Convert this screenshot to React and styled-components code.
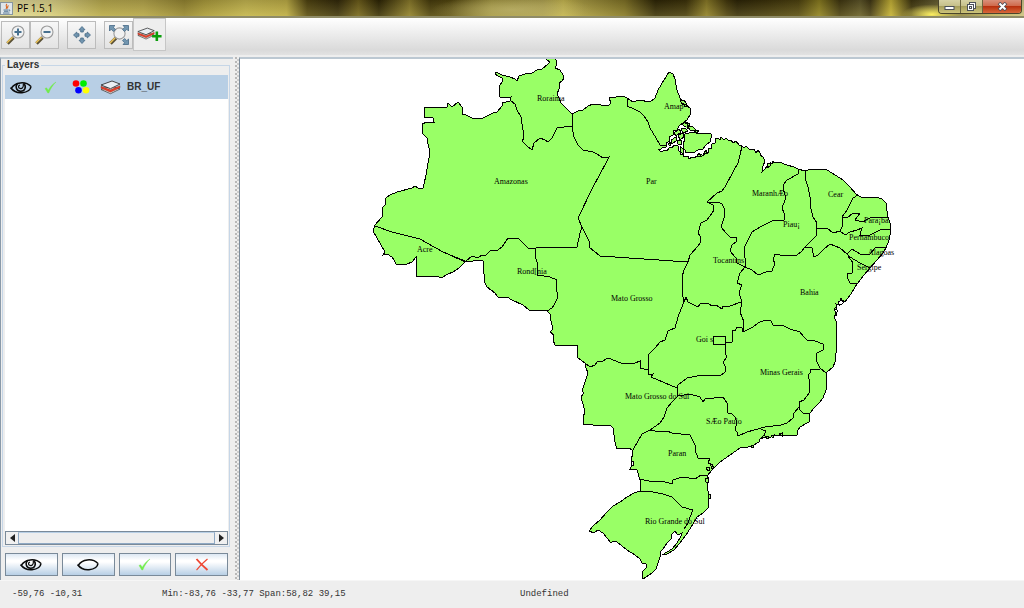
import React from 'react';
import styled, { createGlobalStyle, css } from 'styled-components';

const GlobalStyle = createGlobalStyle`
  * { box-sizing: border-box; }
  body { margin: 0; background: #eeeeee; font-family: "Liberation Sans", Arial, sans-serif; }
  button { font: inherit; margin: 0; padding: 0; }
`;

const Window = styled.div`
  display: flex;
  flex-direction: column;
  height: 100vh;
  background: #eeeeee;
  color: #333333;
`;

const TitleBar = styled.header`
  display: flex;
  align-items: flex-start;
  justify-content: space-between;
  flex: none;
  height: 18px;
  border-bottom: 2px solid #8f8c68;
  background:
    radial-gradient(ellipse 30px 10px at 91% 90%, #fbee62, transparent),
    radial-gradient(ellipse 80px 14px at 50% 60%, rgba(190, 180, 110, 0.7), transparent),
    linear-gradient(180deg, rgba(0, 0, 0, 0.12), rgba(255, 245, 140, 0.18)),
    linear-gradient(90deg,
      #e0d9a0 0, #d5cc85 5%, #b3a54c 10%, #b0a14a 14%, #8f8030 18%, #a5963a 20%, #beb04e 24%,
      #b7a744 28%, #4c4010 30%, #30270a 33%, #695a1a 35%, #2b2305 37%, #85762a 40%, #44390c 42%,
      #50440f 44%, #978a38 48%, #a39647 53%, #c0b14c 55%, #a0923f 57%, #7b6e25 61%, #2c2406 64%,
      #3a300a 67%, #857626 69%, #40350c 71%, #2b2307 72%, #3a300a 75%, #4b400f 78%,
      #85781f 80%, #3d3410 82%, #5a5228 84%, #3d3414 85%, #c0ad35 87%, #3d3410 89%, #5b532b 91%,
      #b8ad62 97%, #c9c08a 100%);
`;

const TitleText = styled.h1`
  display: flex;
  align-items: center;
  gap: 4px;
  margin: 0;
  height: 16px;
  font: 400 10px/16px "Open Sans", "Noto Sans", sans-serif;
  color: #000000;
`;

const WindowControls = styled.div`
  display: flex;
  height: 14px;
  margin-right: 2px;
  border: 1px solid #4a452c;
  border-top: 0;
  border-radius: 0 0 4px 4px;
  overflow: hidden;
`;

const ControlButton = styled.button`
  display: flex;
  align-items: center;
  justify-content: center;
  width: ${p => (p.$close ? 38 : 22)}px;
  border: 0;
  border-right: ${p => (p.$close ? 0 : '1px solid #6b6540')};
  background: ${p => p.$close
    ? 'linear-gradient(#d9907a 0, #cf6a4c 45%, #b8310f 50%, #d8683a 100%)'
    : 'linear-gradient(#d6d1a4 0, #c6c08a 45%, #a69e5c 50%, #cdc47a 100%)'};
`;

const Toolbar = styled.nav`
  display: flex;
  align-items: flex-start;
  flex: none;
  height: 39px;
  padding-left: 1px;
  border-bottom: 2px solid #eeeeee;
  background: linear-gradient(#ffffff 0, #dadada 86%, #e2e2e2 100%);
`;

const ToolGroup = styled.div`
  display: flex;
  padding-top: 3px;
  margin-right: ${p => (p.$joined ? 0 : 8)}px;
`;

const ToolButton = styled.button`
  display: flex;
  align-items: center;
  justify-content: center;
  width: 29px;
  height: 28px;
  border: 1px solid #bcbcbc;
  background: linear-gradient(#f7f7f7, #e3e3e3);
  ${p => p.$large && css`
    width: 33px;
    height: 33px;
    border-color: #c6c6c6;
    background: #eeeeee;
  `}
`;

const Workspace = styled.div`
  display: flex;
  flex: 1;
  min-height: 0;
`;

const SidePanel = styled.aside`
  display: flex;
  flex-direction: column;
  flex: none;
  width: 233px;
  padding: 0 3px 4px 1px;
  border-top: 2px solid #bcc8d2;
  border-left: 1px solid #8a99a8;
`;

const LayersBox = styled.fieldset`
  display: flex;
  flex-direction: column;
  flex: 1;
  min-width: 0;
  min-height: 0;
  margin: 0;
  padding: 4px 1px 1px 2px;
  border: 1px solid #c6d6e7;
`;

const LayersTitle = styled.legend`
  padding: 0 2px;
  font: 700 10px/12px "Liberation Sans", Arial, sans-serif;
`;

const LayerList = styled.ul`
  flex: 1;
  margin: 0;
  padding: 0;
  list-style: none;
  background: #ffffff;
`;

const LayerRow = styled.li`
  display: grid;
  grid-template-columns: 34px 28px 28px 27px 1fr;
  align-items: center;
  height: 24px;
  padding-left: 5px;
  background: #b8cfe5;
  font: 700 10px/14px "Liberation Sans", Arial, sans-serif;
`;

const ScrollBar = styled.div`
  display: flex;
  flex: none;
  height: 14px;
  border: 1px solid #7a8a99;
  background: #eeeeee;
`;

const ScrollArrow = styled.button`
  display: flex;
  align-items: center;
  justify-content: center;
  width: 12px;
  border: 0;
  background: #f0f0f0;
`;

const ScrollThumb = styled.div`
  flex: 1;
  border: 1px solid #8fa9c4;
  border-top-color: #b8cfe5;
  background: #eeeeee;
`;

const ActionRow = styled.div`
  display: grid;
  grid-template-columns: repeat(4, 1fr);
  flex: none;
  gap: 4px;
  margin-top: 6px;
  padding: 0 2px 0 3px;
`;

const ActionButton = styled.button`
  display: flex;
  align-items: center;
  justify-content: center;
  height: 23px;
  border: 1px solid #7a8a99;
  background: linear-gradient(#dde8f3 0, #ffffff 30%, #ffffff 38%, #b8cfe5 100%);
`;

const Divider = styled.div`
  flex: none;
  width: 6px;
  background-color: #eeeeee;
  background-image:
    radial-gradient(circle at 1px 1px, #b8b8b8 1px, transparent 1px),
    radial-gradient(circle at 3px 3px, #cccccc 1px, transparent 1px);
  background-size: 4px 4px;
  background-position: 2px 0;
  background-repeat: repeat-y;
`;

const MapView = styled.main`
  flex: 1;
  min-width: 0;
  border-top: 2px solid #bcc8d2;
  border-left: 1px solid #7a8a99;
  background: #ffffff;
`;

const MapDrawing = styled.svg`
  display: block;
  width: 100%;
  height: 100%;
  .land { fill: #99ff66; stroke: #000000; stroke-width: 1; shape-rendering: crispEdges; }
  .border { fill: none; stroke: #000000; stroke-width: 1; shape-rendering: crispEdges; }
  .water { fill: #ffffff; stroke: #000000; stroke-width: 1; shape-rendering: crispEdges; }
  text { font: 400 8px "Liberation Serif", "Times New Roman", serif; fill: #000000; }
`;

const StatusBar = styled.footer`
  display: grid;
  grid-template-columns: 150px 358px 1fr;
  flex: none;
  height: 28px;
  padding-left: 12px;
  border-top: 1px solid #f6f6f6;
  font: 400 9px/26px "Liberation Mono", "Courier New", monospace;
`;

const COAST = `M548 64 L550 62 546 59 550 58 555 59 557 61 556 66 555 68 560 70 563 75 564 78 562 81
559 83 559 89 557 94 559 98 561 103 567 109 572 114 578 111 583 110 588 106 593 104 608 106 611 103
609 98 616 97 623 96 627 98 633 102 639 100 650 102 655 98 658 90 664 80 669 72 673 74 675 79 677 90
680 98 682 101 684 101 683 104 686 105 691 109 690 115 687 120 683 123 679 126 677 130 673 131 673 135
669 137 670 141 666 143 666 147 662 148 660 150 658 149 661 152 665 150 667 151 670 147 672 148 674 145
677 145 679 147 678 150 680 152 680 155 683 154 684 157 688 156 689 159 692 157 694 158 697 156 699 157
701 154 703 156 706 152 708 153 709 148 711 149 712 144 715 143 715 139 718 138 720 140
721 137 724 140 726 138 729 141 731 140 733 143 736 141 739 145 742 146 744 148 746 146 749 149 752 150
754 149 756 153 758 150 760 153 760 155 763 157 765 161 763 166 762 172 765 169 768 165 773 163 779 162
787 165 794 167 798 169 805 171 811 169 823 169 827 170 832 173 843 180 850 187 856 194 861 197 868 198
876 197 882 199 886 203 887 211 888 217 890 223 891 230 889 240 886 248 883 253 877 260 870 268 864 275
857 284 851 294 845 302 842 300 840 302 838 302 839 305 836 304 837 308 834 309 836 313 834 317 836 321
837 340 836 345 836 353 835 362 833 367 826 373 826 380 826 390 823 398 820 402 814 408 810 413 809 422
800 427 798 430 797 435 773 436 767 439 765 437 760 439 759 442 752 446 748 447 740 448 730 455 720 462
712 470 707 476 708 481 707 483 708 491 709 498 708 508 703 513 697 517 693 524 688 532 680 543 674 550
667 554 662 555 667 552 672 549 677 543 681 536 682 533 678 535 675 531 672 534 671 539 667 543 663 549
660 552 661 554 659 560 656 569 652 573 643 579 642 572 647 567 646 564 642 563 640 559 635 555 627 550
617 542 613 541 611 543 607 538 603 533 598 530 594 533 589 531 593 526 600 520 607 512 613 506 620 502
627 497 634 493 640 491 640 480 637 470 634 469 630 469 633 464 631 459 633 454 632 450 629 448 623 448
617 449 615 442 613 428 610 425 603 426 583 424 583 417 585 412 583 404 581 397 584 393 582 391 585 382
588 373 586 368 585 363 578 358 577 353 578 346 555 345 553 340 554 335 550 332 553 329 551 321 550 314
547 311 529 310 523 305 512 300 507 297 498 297 495 293 491 290 487 287 484 281 484 274 483 271 484 262
482 260 465 262 459 268 453 272 448 274 441 278 437 276 416 277 416 257 412 262 407 264 396 264 394 260
392 257 387 254 383 255 385 252 381 245 377 238 373 231 375 225 382 217 382 208 385 205 386 198 390 195
397 192 412 188 415 186 418 188 423 188 424 184 426 175 430 152 428 144 427 138 422 133 422 124 427 122
434 122 433 118 424 117 424 107 447 107 448 103 452 107 458 102 462 107 462 114 466 115 472 118 477 119
483 118 485 117 493 113 497 112 502 106 502 103 510 101 511 97 507 98 500 97 499 87 502 82 502 78 498 76
495 74 496 72 502 75 510 77 515 79 517 81 519 76 525 74 532 73 537 70 542 69Z`;

const BORDERS = [
  'M511 101 L515 104 517 110 521 117 523 130 524 138 522 141 527 146 532 150 534 143 540 138 545 140 548 142 552 138 557 128 572 126',
  'M572 114 L572 127 574 137 578 145 583 150 593 152 597 154 603 158 609 157 607 161 593 187 578 218 582 227 580 233 577 247 536 248 528 248 518 238 508 238 502 247 498 250 490 251 485 256 482 255 478 258 472 256 465 262',
  'M375 226 L392 232 420 239 443 252 465 261 M448 254 L465 262',
  'M536 248 L535 256 537 262 537 275 550 277 557 280 556 286 558 297 554 305 552 308 547 311',
  'M582 227 L589 241 589 247 600 256 688 262',
  'M688 262 L690 255 698 246 700 243 700 236 698 233 701 223 707 220 712 213 714 210 713 205 707 202 718 202 722 204 724 208 724 218 721 227 726 233 730 237 737 238 736 242 732 245 730 251 736 258 737 263 745 267',
  'M742 146 L740 155 738 163 733 172 725 187 722 191 717 193 707 202',
  'M688 262 L684 270 682 277 682 292 684 302 686 297 688 302 698 307 701 303 704 304 708 303 712 306 716 305 722 309 723 306 730 306 741 302',
  'M745 267 L740 273 737 283 742 285 739 292 740 296 742 302 740 312 744 322 743 332',
  'M798 169 L798 174 787 180 784 184 783 188 785 195 785 200 782 208 784 213 784 220 772 221 762 226 752 232 748 240 744 248 745 258 745 267',
  'M805 171 L805 178 808 187 810 197 811 209 813 217 817 223 816 236 805 247 802 251 797 255 785 256 775 254 773 260 775 263 772 271 766 272 758 275 752 270 745 267',
  'M816 229 L827 228 833 233 840 231 845 235 850 232 857 230 862 228 860 235 870 235 880 230 890 229',
  'M858 195 L853 198 847 210 842 217 843 224 840 232',
  'M842 217 L847 218 853 213 860 213 855 220 863 222 866 220 872 217 888 217',
  'M805 247 L812 248 814 257 818 255 824 249 830 244 840 248 847 254 852 249 860 254 870 254 875 248 887 247',
  'M847 254 L850 257 860 263 870 268 M848 256 L853 263 852 273 847 274 848 279 850 283 857 284',
  'M743 332 L753 327 758 323 765 320 771 321 773 325 782 325 790 329 800 332 803 336 807 340 815 341 823 344 823 350 817 353 816 360 820 368 826 373',
  'M820 369 L810 369 811 372 808 375 810 383 809 393 804 400 799 402 799 409 803 413 810 413',
  'M799 407 L794 413 793 418 787 423 781 425 765 427 747 432 738 436 737 432 735 430 737 423 735 417 731 413 728 413 727 403 723 397 705 399 703 402 700 397 690 394 678 396',
  'M758 428 L766 431 764 435 760 439',
  'M743 332 L742 328 737 327 735 331 732 330 732 342 725 343 726 348 725 353 727 357 723 362 726 368 725 372 720 376 702 375 687 378 678 385 677 390 678 396',
  'M713 336H725V344H713Z',
  'M684 302 L681 309 678 317 675 328 670 330 668 331 665 340 660 342 655 348 648 355 648 372',
  'M585 363 L590 367 595 365 598 361 603 361 608 358 616 361 623 364 630 363 635 363 640 361 640 368 648 370 649 375 653 374 651 377 677 388',
  'M677 390 L677 397 672 402 667 408 664 417 660 423 650 430 642 434 638 441 633 450',
  'M648 430 L662 432 667 431 672 433 690 435 695 445 695 450 698 458 710 458 708 463 713 465 711 469',
  'M640 479 L653 482 662 481 672 484 673 480 682 477 689 478 695 479 701 475 707 475',
  'M640 491 L653 492 663 494 672 497 682 507 693 510 690 517 688 523 684 529',
  'M627 98 L627 106 634 109 640 112 644 116 648 122 650 128 656 138 660 145 666 145',
];

const ISLANDS = [
  'M685 134 L693 132 700 134 705 133 711 134 711 138 710 142 706 145 703 149 698 150 693 153 690 152 686 153 685 150 683 148 684 145 683 143 685 140 684 137Z',
  'M687 126 L693 127 696 130 691 131Z',
  'M693 130 L699 130 697 133Z',
  'M682 124 L686 122 690 124 688 127 684 126Z',
  'M678 135 L683 133 684 137 680 140Z',
  'M677 140 L682 140 681 145 678 144Z',
  'M674 133 L679 129 681 132 676 136Z',
  'M681 129 L685 128 688 131 683 133Z',
  'M671 140 L676 137 676 141 672 144Z',
  'M680 146 L683 149 683 154 680 151Z',
  'M685 123 L688 124 687 129',
  'M668 144 L671 142 670 146Z',
  'M697 156 L699 153 701 156Z M704 153 L706 150 707 153Z',
  'M767 164 L770 163 770 166 767 168Z',
  'M772 161 L774 161 773 163Z',
  'M751 445 L754 445 753 448 751 447Z',
  'M779 434 L782 433 782 436Z',
  'M765 436 L769 437 767 439Z M771 436 L774 435 773 438Z',
  'M706 468 L709 467 710 470 708 471Z M711 466 L714 467 712 469Z',
  'M705 479 L708 478 708 482 706 482Z',
  'M708 494 L711 495 710 499 708 498Z',
  'M680 101 L684 100 687 104 683 105Z M684 104 L688 106 685 107Z',
  'M834 309 L836 307 837 310Z M835 313 L837 312 836 316Z',
];

const WATERS = [
  'M838 301 L840 301 841 298 842 301 844 302 842 304 838 304Z',
  'M631 461 L633 461 633 465 631 465Z',
];

const LABELS = [
  [537, 101, 'Roraima'], [664, 109, 'Amap'], [494, 184, 'Amazonas'], [646, 184, 'Par'],
  [752, 196, 'MaranhÆo'], [828, 197, 'Cear'], [783, 227, 'Piau¡'], [864, 223, 'Para¡ba'],
  [849, 240, 'Pernambuco'], [868, 255, 'Alagoas'], [857, 270, 'Sergipe'], [800, 295, 'Bahia'],
  [713, 263, 'Tocantins'], [417, 252, 'Acre'], [517, 274, 'Rond[nia'], [611, 301, 'Mato Grosso'],
  [696, 342, 'Goi s'], [760, 375, 'Minas Gerais'], [625, 399, 'Mato Grosso do Sul'],
  [706, 424, 'SÆo Paulo'], [668, 456, 'Paran'], [645, 524, 'Rio Grande do Sul'],
];

const JavaIcon = () => (
  <svg width="13" height="13" viewBox="0 0 13 13" aria-hidden="true">
    <rect x="0.5" y="0.5" width="12" height="12" fill="#dfe6ea" stroke="#8796a0" />
    <path d="M7 2 C4.5 4 8 4.5 6 7 M8.5 3.5 C7 4.5 8 5.5 7.5 6.5" fill="none" stroke="#d8651f" strokeWidth="1.1" />
    <path d="M3.5 8H8.5 M4 9.3H8.2 M3 11H9.5 M8.8 8C10.5 7.5 10 9 8.8 9.3" fill="none" stroke="#4d7191" strokeWidth="0.9" />
  </svg>
);

const Lens = ({ sign }) => (
  <svg width="22" height="22" viewBox="0 0 22 22" aria-hidden="true">
    <path d="M8.5 13.5 L2.5 19.5" stroke="#5a5136" strokeWidth="3.4" />
    <path d="M7.6 13.2 L2 18.8" stroke="#ecc45a" strokeWidth="1.6" />
    <circle cx="13" cy="8" r="6" fill="#f1f2f3" stroke="#9b9b9b" strokeWidth="1.1" />
    <path d={sign === '+' ? 'M13 4.5V11.5 M9.5 8H16.5' : 'M9.5 8H16.5'} stroke="#47708f" strokeWidth="2" />
  </svg>
);

const PanIcon = () => (
  <svg width="20" height="20" viewBox="0 0 20 20" fill="#7296b0" stroke="#466a86" strokeWidth="0.8" aria-hidden="true">
    <path d="M10 1.5 L13 4.8 H11.3 V7 H8.7 V4.8 H7Z M10 18.5 L13 15.2 H11.3 V13 H8.7 V15.2 H7Z" />
    <path d="M1.5 10 L4.8 7 V8.7 H7 V11.3 H4.8 V13Z M18.5 10 L15.2 7 V8.7 H13 V11.3 H15.2 V13Z" />
  </svg>
);

const FullExtentIcon = () => (
  <svg width="22" height="22" viewBox="0 0 22 22" aria-hidden="true">
    <path d="M8 14 L2.5 19.5" stroke="#5a5136" strokeWidth="3.4" />
    <path d="M7.2 13.8 L2 19" stroke="#ecc45a" strokeWidth="1.6" />
    <circle cx="11.5" cy="9.5" r="5.6" fill="#f1f1f1" stroke="#9b9b9b" strokeWidth="1.1" />
    <g fill="#7296b0" stroke="#466a86" strokeWidth="0.8">
      <path d="M1.5 1.5H7L5.3 3.2L7.5 5.4L5.4 7.5L3.2 5.3L1.5 7Z" />
      <path d="M20.5 1.5H15L16.7 3.2L14.5 5.4L16.6 7.5L18.8 5.3L20.5 7Z" />
      <path d="M20.5 20.5H15L16.7 18.8L14.5 16.6L16.6 14.5L18.8 16.7L20.5 15Z" />
    </g>
  </svg>
);

const LayerShapes = () => (
  <>
    <path d="M1 9.5 L11 6 L20 9 L10.5 13.7Z" fill="#e8e8e8" stroke="#444444" strokeWidth="0.8" />
    <path d="M1 6.3 L10.5 9.8 L20 5.8 V7.8 L10.5 12.2 L1 8.3Z" fill="#e8402a" stroke="#7c2a1e" strokeWidth="0.4" />
    <path d="M1 5 L12 1 L20 4 L10.5 8.7Z" fill="#e9eef3" stroke="#333333" strokeWidth="0.9" />
  </>
);

const LayerIcon = () => (
  <svg width="21" height="15" viewBox="0 0 21 15" aria-hidden="true"><LayerShapes /></svg>
);

const AddLayerIcon = () => (
  <svg width="25" height="16" viewBox="0 0 29 18" aria-hidden="true">
    <LayerShapes />
    <path d="M23 5V16 M17.5 10.5H28.5" stroke="#0b9d0b" strokeWidth="3" />
  </svg>
);

const EyeIcon = ({ closed }) => (
  <svg width="22" height="13" viewBox="0 0 22 13" fill="none" stroke="#0a0a0a" aria-hidden="true">
    <path d="M1.5 7 C5 1.5 15 -0.5 21 5.5" strokeWidth="1.4" />
    <path d="M0.5 6.5 C4 11 9 12 12 11.7 C17 11.2 20.5 9 21 5.5" strokeWidth="1.6" />
    {!closed && (
      <>
        <path d="M7.5 2.6 C5 5 6 10 10.5 10.3 C15 10.5 17 5.5 13.5 2.4" strokeWidth="1.5" />
        <path d="M13.2 3 C14 6 12 8 10 7.4 C8 7 8 4.5 10 4" strokeWidth="1.2" />
      </>
    )}
  </svg>
);

const CheckIcon = () => (
  <svg width="13" height="13" viewBox="0 0 13 13" aria-hidden="true">
    <path d="M1 7.5 L2.5 6.8 L4.3 9.3 C6 6 8.5 3 12 1 C9 4 6.5 7.5 4.8 12 L3.8 12Z" fill="#72ec4b" stroke="#72ec4b" strokeWidth="0.4" />
  </svg>
);

const CrossIcon = () => (
  <svg width="14" height="13" viewBox="0 0 14 13" fill="none" stroke="#ef4632" aria-hidden="true">
    <path d="M1.5 1 C4 4 9 9 12.5 12" strokeWidth="1.9" />
    <path d="M12.5 1 C8 4.5 5 8 1.5 12" strokeWidth="1.2" />
  </svg>
);

const ColorsIcon = () => (
  <svg width="18" height="14" viewBox="0 0 18 14" aria-hidden="true">
    <circle cx="4" cy="3.5" r="3.3" fill="#ff0000" />
    <circle cx="11.5" cy="3.5" r="3.3" fill="#00ee00" />
    <circle cx="6.5" cy="10.3" r="3.3" fill="#0000ff" />
    <circle cx="14" cy="10.3" r="3.3" fill="#ffff00" />
  </svg>
);

const Triangle = ({ right }) => (
  <svg width="5" height="8" viewBox="0 0 5 8" aria-hidden="true">
    <path d={right ? 'M0 0 L5 4 L0 8Z' : 'M5 0 L0 4 L5 8Z'} fill="#222222" />
  </svg>
);

const MinimizeIcon = () => (
  <svg width="11" height="9" viewBox="0 0 11 9" aria-hidden="true">
    <rect x="1" y="4.5" width="9" height="3" fill="#ffffff" stroke="#4b5058" />
  </svg>
);

const RestoreIcon = () => (
  <svg width="11" height="10" viewBox="0 0 11 10" fill="#ffffff" stroke="#4b5058" aria-hidden="true">
    <rect x="3.5" y="0.5" width="6" height="6" />
    <rect x="1.5" y="2.5" width="6" height="6" />
    <rect x="3.5" y="4.5" width="2" height="2" />
  </svg>
);

const CloseIcon = () => (
  <svg width="11" height="9" viewBox="0 0 11 9" fill="none" aria-hidden="true">
    <path d="M2 1 L9 8 M9 1 L2 8" stroke="#4b4b55" strokeWidth="3.6" />
    <path d="M2.5 1.5 L8.5 7.5 M8.5 1.5 L2.5 7.5" stroke="#ffffff" strokeWidth="2" />
  </svg>
);

const BrazilMap = () => (
  <MapDrawing viewBox="240 59 784 521" preserveAspectRatio="xMinYMin meet" role="img" aria-label="BR_UF">
    <path className="land" d={COAST} />
    {WATERS.map(d => <path key={d} className="water" d={d} />)}
    {ISLANDS.map(d => <path key={d} className="land" d={d} />)}
    {BORDERS.map(d => <path key={d} className="border" d={d} />)}
    {LABELS.map(([x, y, name]) => <text key={name} x={x} y={y}>{name}</text>)}
  </MapDrawing>
);

export default function App() {
  return (
    <Window>
      <GlobalStyle />
      <TitleBar>
        <TitleText><JavaIcon />PF 1.5.1</TitleText>
        <WindowControls>
          <ControlButton aria-label="Minimize"><MinimizeIcon /></ControlButton>
          <ControlButton aria-label="Restore"><RestoreIcon /></ControlButton>
          <ControlButton $close aria-label="Close"><CloseIcon /></ControlButton>
        </WindowControls>
      </TitleBar>
      <Toolbar>
        <ToolGroup>
          <ToolButton aria-label="Zoom in"><Lens sign="+" /></ToolButton>
          <ToolButton aria-label="Zoom out"><Lens sign="-" /></ToolButton>
        </ToolGroup>
        <ToolGroup>
          <ToolButton aria-label="Pan"><PanIcon /></ToolButton>
        </ToolGroup>
        <ToolGroup $joined>
          <ToolButton aria-label="Full extent"><FullExtentIcon /></ToolButton>
        </ToolGroup>
        <ToolButton $large aria-label="Add layer"><AddLayerIcon /></ToolButton>
      </Toolbar>
      <Workspace>
        <SidePanel>
          <LayersBox>
            <LayersTitle>Layers</LayersTitle>
            <LayerList>
              <LayerRow>
                <EyeIcon />
                <CheckIcon />
                <ColorsIcon />
                <LayerIcon />
                <span>BR_UF</span>
              </LayerRow>
            </LayerList>
            <ScrollBar>
              <ScrollArrow aria-label="Scroll left"><Triangle /></ScrollArrow>
              <ScrollThumb />
              <ScrollArrow aria-label="Scroll right"><Triangle right /></ScrollArrow>
            </ScrollBar>
          </LayersBox>
          <ActionRow>
            <ActionButton aria-label="Show all"><EyeIcon /></ActionButton>
            <ActionButton aria-label="Hide all"><EyeIcon closed /></ActionButton>
            <ActionButton aria-label="Select all"><CheckIcon /></ActionButton>
            <ActionButton aria-label="Clear selection"><CrossIcon /></ActionButton>
          </ActionRow>
        </SidePanel>
        <Divider />
        <MapView><BrazilMap /></MapView>
      </Workspace>
      <StatusBar>
        <span>-59,76 -10,31</span>
        <span>Min:-83,76 -33,77 Span:58,82 39,15</span>
        <span>Undefined</span>
      </StatusBar>
    </Window>
  );
}
